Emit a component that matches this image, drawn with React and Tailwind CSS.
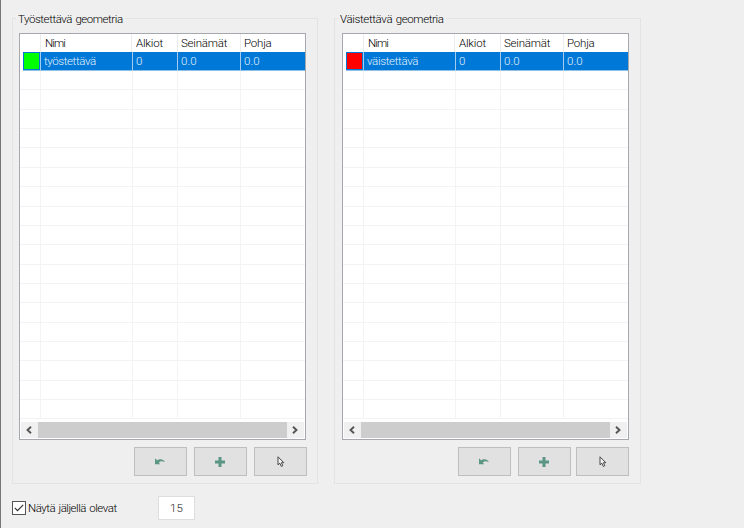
import React from "react";

const ROWS = Array.from({ length: 18 }, (_, i) => i);

function UndoIcon() {
  return (
    <svg width="10" height="8" viewBox="0 0 10 8" className="mt-px mr-[2px] block">
      <path d="M0 .8v5.400h5.200L3.800 4.800C4.600 3.200 6.500 2.700 9.800 3.900 8.600.8 4.300.2 2 2.600L.9.8z" fill="#5b9583" />
    </svg>
  );
}

function PlusIcon() {
  return (
    <svg width="10" height="10" viewBox="0 0 10 10" className="mr-[2px] block">
      <path d="M3.500 0h3v3.500H10v3H6.500V10h-3V6.500H0v-3h3.500z" fill="#5b9583" />
    </svg>
  );
}

function PointerIcon() {
  return (
    <svg width="8" height="11" viewBox="0 0 8 11" className="mb-px block">
      <path d="M1 .8v8l1.800-1.600 1.500 3.200 1.500-.7-1.400-3h2.400z" fill="#f4f4f4" stroke="#333" strokeWidth=".9" />
    </svg>
  );
}

function Chevron({ right }) {
  return (
    <svg width="6" height="8" viewBox="0 0 6 8" className={right ? "mr-px block" : "mr-[2px] block"}>
      <path d={right ? "M1 .7 4.500 4 1 7.300" : "M5 .7 1.500 4 5 7.300"} fill="none" stroke="#555" strokeWidth="1.900" />
    </svg>
  );
}

function Button({ children, className = "" }) {
  return (
    <button className={`flex h-[29px] w-[53px] items-center justify-center border border-[#bebebe] bg-[#e1e1e1] ${className}`}>
      {children}
    </button>
  );
}

function Panel({ title, titleClass, name, nameClass, swatch, className, tableLeft, lastGap, buttonsLeft }) {
  return (
    <fieldset className={`h-[466px] border border-[#e3e3e3] ${className}`}>
      <div className={`-mt-2 ml-[3px] h-4 w-fit bg-[#efefef] px-0.5 leading-[17px] [word-spacing:1px] whitespace-nowrap ${titleClass}`}>
        {title}
      </div>
      <div className={`mt-[6px] flex h-[407px] w-[287px] flex-col border border-[#a5a8ad] bg-white ${tableLeft}`}>
        <div className="grid h-[18px] shrink-0 grid-cols-[21px_91px_46px_63px_64px] leading-[19px] tracking-[-0.2px]">
          <span className="border-r border-[#ececec]" />
          <span className="border-r border-[#ececec] pl-1 tracking-[-0.9px]">Nimi</span>
          <span className="border-r border-[#ececec] pl-1">Alkiot</span>
          <span className="border-r border-[#ececec] pl-[3px]">Seinämät</span>
          <span className="pl-[3px]">Pohja</span>
        </div>
        <div className="ml-[3px] grid h-[19px] shrink-0 grid-cols-[18px_92px_45px_63px_64px] border-b border-[#8fc0e8] bg-[#0078d7] leading-[19px] text-[#e6f3fc]">
          <span className="border-r border-[#a3cbed] py-px pl-px">
            <i className={`block h-4 w-[15px] ${swatch}`} />
          </span>
          <span className={`border-r border-[#a3cbed] pl-[3px] ${nameClass}`}>{name}</span>
          <span className="border-r border-[#a3cbed] pl-[3px]">0</span>
          <span className="border-r border-[#a3cbed] pl-[3px]">0.0</span>
          <span className="pl-[3px]">0.0</span>
        </div>
        <div className="flex h-[351px] shrink-0 flex-col">
          {ROWS.map((i) => (
            <div key={i} className="grid h-[19.370px] shrink-0 grid-cols-[21px_92px_45px_63px_64px] border-b border-[#f3f3f3]">
              <span className="border-r border-[#f3f3f3]" />
              <span className="border-r border-[#f3f3f3]" />
              <span className="border-r border-[#f3f3f3]" />
              <span className="border-r border-[#f3f3f3]" />
              <span />
            </div>
          ))}
        </div>
        <div className="mx-px flex h-4 shrink-0 bg-[#f0f0f0]">
          <div className="flex w-[17px] items-center justify-center"><Chevron /></div>
          <div className="flex-1 bg-[#cdcdcd]" />
          <div className="flex w-[17px] items-center justify-center"><Chevron right /></div>
        </div>
      </div>
      <div className={`mt-[7px] flex ${buttonsLeft}`}>
        <Button><UndoIcon /></Button>
        <Button className="ml-[7px]"><PlusIcon /></Button>
        <Button className={lastGap}><PointerIcon /></Button>
      </div>
    </fieldset>
  );
}

export default function App() {
  return (
    <main className="h-[528px] w-[744px] overflow-hidden border-l border-[#777] bg-[#efefef] pt-[18px] pl-[11px] font-['Roboto',sans-serif] text-[11.5px] font-light tracking-[0px] text-black">
      <div className="flex">
        <Panel
          title="Työstettävä geometria"
          titleClass="tracking-[-0.44px]"
          name="työstettävä"
          nameClass="tracking-[-0.4px]"
          swatch="bg-[#00ff00]"
          className="w-[306px]"
          tableLeft="ml-[6px]"
          buttonsLeft="ml-[121px]"
          lastGap="ml-[7px]"
        />
        <Panel
          title="Väistettävä geometria"
          titleClass="tracking-[-0.36px]"
          name="väistettävä"
          nameClass="tracking-[-0.33px]"
          swatch="bg-[#ff0000]"
          className="ml-[16px] w-[307px]"
          tableLeft="ml-[7px]"
          buttonsLeft="ml-[123px]"
          lastGap="ml-[5px]"
        />
      </div>
      <div className="mt-3 flex h-6 items-center">
        <span className="flex size-[14px] items-center justify-center border border-[#555] bg-white">
          <svg width="10" height="8" viewBox="0 0 10 8">
            <path d="m.8 3.800 2.700 2.800L9.200.9" fill="none" stroke="#333" strokeWidth="1.200" />
          </svg>
        </span>
        <span className="ml-[2px] w-[130px] pt-px tracking-[-0.48px] [word-spacing:1px] whitespace-nowrap">Näytä jäljellä olevat</span>
        <span className="flex h-6 w-[37px] items-center justify-center border border-[#dedede] bg-white pt-px text-[#222]">15</span>
      </div>
    </main>
  );
}
